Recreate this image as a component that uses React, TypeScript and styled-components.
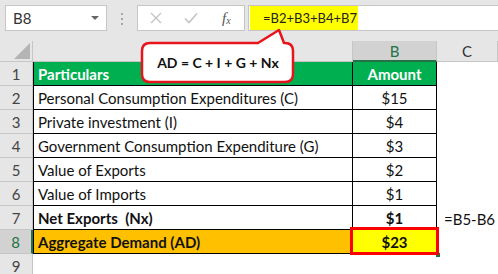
import React from 'react';
import styled, { createGlobalStyle, css } from 'styled-components';

const GlobalStyle = createGlobalStyle`
  html, body {
    margin: 0;
    padding: 0;
    background: #fff;
  }
  body {
    font-family: Lato, "Liberation Sans", sans-serif;
  }
`;

const Page = styled.div`
  position: relative;
  width: 498px;
  height: 274px;
  overflow: hidden;
  background: #fff;
`;

const Toolbar = styled.div`
  display: flex;
  align-items: flex-start;
  height: 41px;
  padding-top: 5px;
  box-sizing: border-box;
  background: #e6e6e6;
`;

const NameBox = styled.div`
  display: flex;
  align-items: center;
  justify-content: space-between;
  margin-left: 5px;
  width: 102px;
  height: 26px;
  box-sizing: border-box;
  padding: 0 7px 0 7px;
  background: #fff;
  border: 1px solid #c6c6c6;
  font-size: 15px;
  color: #333;
`;

const DropArrow = styled.span`
  width: 0;
  height: 0;
  border-left: 4px solid transparent;
  border-right: 4px solid transparent;
  border-top: 4px solid #666;
`;

const Grip = styled.div`
  display: flex;
  flex-direction: column;
  gap: 3px;
  margin: 8px 0 0 14px;

  span {
    width: 2px;
    height: 2px;
    background: #a6a6a6;
  }
`;

const FormulaButtons = styled.div`
  display: flex;
  align-items: center;
  margin-left: 14px;
  width: 108px;
  height: 26px;
  box-sizing: border-box;
  background: #fff;
  border: 1px solid #c6c6c6;
`;

const ButtonSlot = styled.span`
  display: flex;
  align-items: center;
  justify-content: center;
  width: 36px;
  height: 100%;
`;

const Fx = styled.span`
  font-family: "Liberation Serif", serif;
  font-style: italic;
  font-size: 15px;
  color: #555;

  sub {
    font-size: 10px;
    vertical-align: -1px;
  }
`;

const FormulaInput = styled.div`
  display: flex;
  flex: 1;
  margin-left: 3px;
  height: 26px;
  box-sizing: border-box;
  background: #fff;
  border: 1px solid #c6c6c6;
  border-right: none;
`;

const FormulaText = styled.span`
  display: flex;
  align-items: center;
  margin-left: 1px;
  width: 108px;
  padding-left: 13px;
  box-sizing: border-box;
  background: #ffff00;
  font-size: 13px;
  color: #222;
`;

const Sheet = styled.div`
  display: grid;
  grid-template-columns: 33px 320px 84px 61px;
  grid-template-rows: 21px repeat(9, 24px);
  font-size: 15px;
`;

const Corner = styled.div`
  display: flex;
  align-items: flex-end;
  justify-content: flex-end;
  padding: 0 2px 2px 0;
  box-sizing: border-box;
  background: #e6e6e6;
  border-right: 1px solid #c6c6c6;
  border-bottom: 1px solid #c6c6c6;
`;

const ColHead = styled.div<{ $active?: boolean }>`
  display: flex;
  align-items: center;
  justify-content: center;
  box-sizing: border-box;
  background: ${p => (p.$active ? '#d2d2d2' : '#e6e6e6')};
  color: ${p => (p.$active ? '#217346' : '#333')};
  border-right: 1px solid #c6c6c6;
  border-bottom: ${p => (p.$active ? '2px solid #217346' : '1px solid #c6c6c6')};
`;

const RowHead = styled.div<{ $active?: boolean }>`
  display: flex;
  align-items: center;
  justify-content: center;
  padding-top: 1px;
  box-sizing: border-box;
  background: ${p => (p.$active ? '#d2d2d2' : '#e6e6e6')};
  color: ${p => (p.$active ? '#217346' : '#444')};
  border-bottom: 1px solid #c6c6c6;
  border-right: ${p => (p.$active ? '2px solid #217346' : '1px solid #c6c6c6')};
`;

type Tone = 'plain' | 'head' | 'total' | 'result';

const toneBg: Record<Tone, string> = {
  plain: '#fff',
  head: '#00b050',
  total: '#ffc000',
  result: '#ffff00',
};

const Cell = styled.div<{ $tone?: Tone; $center?: boolean; $bold?: boolean; $first?: boolean }>`
  position: relative;
  display: flex;
  align-items: center;
  justify-content: ${p => (p.$center ? 'center' : 'flex-start')};
  padding: 1px 4px 0 4px;
  box-sizing: border-box;
  white-space: pre;
  background: ${p => toneBg[p.$tone ?? 'plain']};
  color: ${p => (p.$tone === 'head' ? '#fff' : '#111')};
  font-weight: ${p => (p.$bold || p.$tone === 'head' ? 700 : 400)};
  border-right: 1px solid #000;
  border-bottom: 1px solid #000;
  ${p => p.$first && css`border-left: 1px solid #000;`}

  ${p =>
    p.$tone === 'result' &&
    css`
      &::after {
        content: '';
        position: absolute;
        left: -3px;
        top: -3px;
        right: -3px;
        bottom: -2px;
        border: 3px solid #f00;
        pointer-events: none;
      }
      &::before {
        content: '';
        position: absolute;
        right: -4px;
        bottom: -4px;
        width: 4px;
        height: 4px;
        background: #217346;
      }
    `}
`;

const Blank = styled.div`
  display: flex;
  align-items: center;
  padding: 1px 0 0 7px;
  background: #fff;
  color: #111;
  white-space: nowrap;
`;

const Callout = styled.div`
  position: absolute;
  left: 140px;
  top: 28px;
  width: 156px;
  height: 56px;
  padding-top: 15px;
  box-sizing: border-box;
`;

const CalloutShape = styled.svg`
  position: absolute;
  left: 0;
  top: 0;
`;

const CalloutText = styled.div`
  position: relative;
  display: flex;
  align-items: center;
  justify-content: center;
  height: 39px;
  font-size: 14px;
  font-weight: 700;
  color: #111;
  white-space: pre;
`;

type Row = { n: number; label: string; value: string; tone?: Tone; bold?: boolean; note?: string };

const rows: Row[] = [
  { n: 1, label: 'Particulars', value: 'Amount', tone: 'head' },
  { n: 2, label: 'Personal Consumption Expenditures (C)', value: '$15' },
  { n: 3, label: 'Private investment (I)', value: '$4' },
  { n: 4, label: 'Government Consumption Expenditure (G)', value: '$3' },
  { n: 5, label: 'Value of Exports', value: '$2' },
  { n: 6, label: 'Value of Imports', value: '$1' },
  { n: 7, label: 'Net Exports  (Nx)', value: '$1', bold: true, note: '=B5-B6' },
  { n: 8, label: 'Aggregate Demand (AD)', value: '$23', tone: 'total', bold: true },
];

const App: React.FC = () => {
  return (
    <>
      <GlobalStyle />
      <Page>
        <Toolbar>
          <NameBox>
            B8
            <DropArrow />
          </NameBox>
          <Grip>
            <span />
            <span />
            <span />
          </Grip>
          <FormulaButtons>
            <ButtonSlot>
              <svg width="12" height="12" viewBox="0 0 12 12">
                <path d="M1 1 L11 11 M11 1 L1 11" stroke="#c4c4c4" strokeWidth="1.4" />
              </svg>
            </ButtonSlot>
            <ButtonSlot>
              <svg width="14" height="12" viewBox="0 0 14 12">
                <path d="M1 6.5 L5 10.5 L13 1.5" stroke="#c4c4c4" strokeWidth="1.6" fill="none" />
              </svg>
            </ButtonSlot>
            <ButtonSlot>
              <Fx>
                f<sub>x</sub>
              </Fx>
            </ButtonSlot>
          </FormulaButtons>
          <FormulaInput>
            <FormulaText>=B2+B3+B4+B7</FormulaText>
          </FormulaInput>
        </Toolbar>

        <Sheet>
          <Corner>
            <svg width="16" height="16" viewBox="0 0 16 16">
              <path d="M16 0 L16 16 L0 16 Z" fill="#b4b4b4" />
            </svg>
          </Corner>
          <ColHead />
          <ColHead $active>B</ColHead>
          <ColHead>C</ColHead>

          {rows.map(r => (
            <React.Fragment key={r.n}>
              <RowHead $active={r.n === 8}>{r.n}</RowHead>
              <Cell $first $tone={r.tone} $bold={r.bold}>
                {r.label}
              </Cell>
              <Cell $center $tone={r.tone === 'total' ? 'result' : r.tone} $bold={r.bold}>
                {r.value}
              </Cell>
              <Blank>{r.note}</Blank>
            </React.Fragment>
          ))}

          <RowHead>9</RowHead>
          <Blank />
          <Blank />
          <Blank />
        </Sheet>

        <Callout>
          <CalloutShape width="156" height="56" viewBox="0 0 156 56">
            <path
              d="M10 15 H118 L139 2 L144 15 H145 Q153 15 153 23 V46 Q153 54 145 54 H10 Q2 54 2 46 V23 Q2 15 10 15 Z"
              fill="#fff"
              stroke="#e8141b"
              strokeWidth="2.5"
              strokeLinejoin="round"
            />
          </CalloutShape>
          <CalloutText>AD = C + I + G + Nx</CalloutText>
        </Callout>
      </Page>
    </>
  );
};

export default App;
